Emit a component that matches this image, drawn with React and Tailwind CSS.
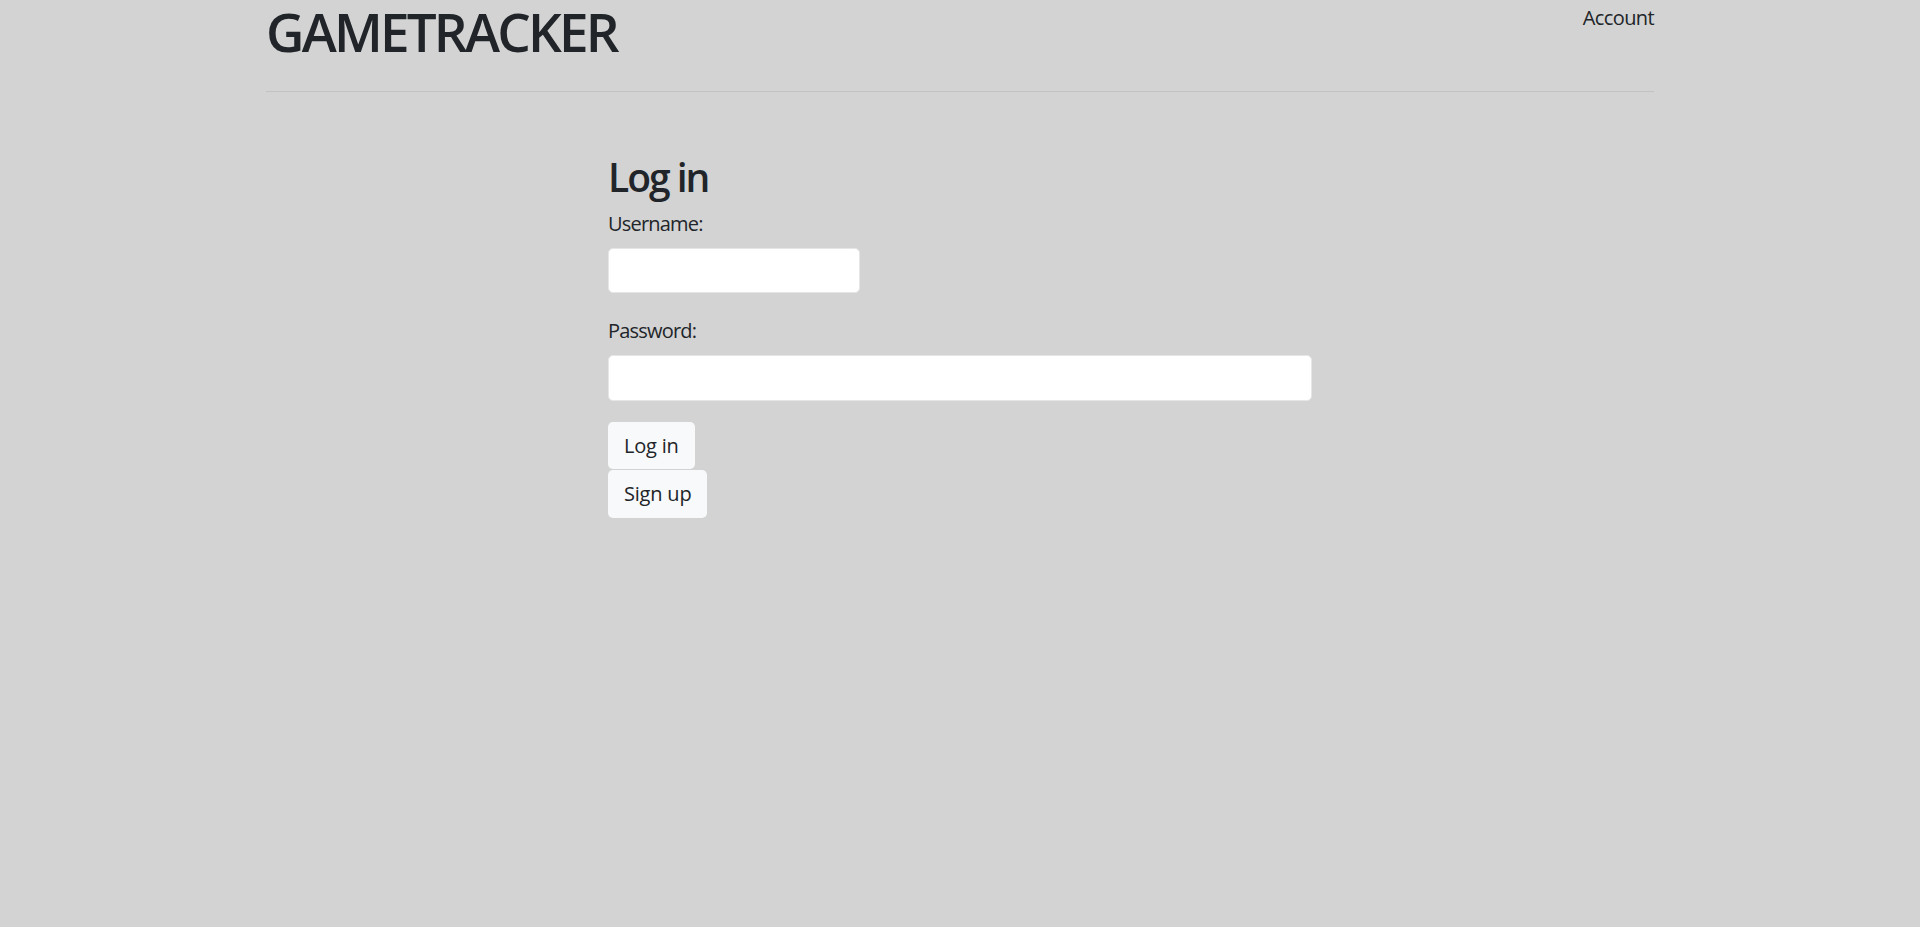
import React from 'react';

const App = () => {
  return (
    <div className="min-h-[927px] bg-[#d3d3d3] text-[#212529] font-['Open_Sans',sans-serif]">
      {/* Header */}
      <div className="mx-[266px]">
        <header className="h-[92px] flex justify-between items-start border-b border-[#c2c2c2]">
          <h1 className="pt-[2px] text-[53px] leading-[60px] font-semibold tracking-[-2.8px]">GAMETRACKER</h1>
          <a href="#" className="pt-[3px] text-[20px] leading-[30px] tracking-[-0.6px]">Account</a>
        </header>
      </div>

      {/* Login form */}
      <main className="w-[704px] mx-auto pt-[61px]">
        <h2 className="text-[39px] leading-[48px] font-semibold tracking-[-2px]">Log in</h2>
        <form className="mt-[8px]" onSubmit={(e) => e.preventDefault()}>
          <div className="mb-[21px]">
            <label className="block text-[20px] leading-[30px] mb-[9px] tracking-[-0.8px]">Username:</label>
            <input type="text" className="block w-[252px] h-[45px] bg-white rounded-[5px] border border-[#e6e6e6] outline-none px-3" />
          </div>
          <div className="mb-[21px]">
            <label className="block pt-[2px] text-[20px] leading-[30px] mb-[9px] tracking-[-0.8px]">Password:</label>
            <input type="password" className="block w-full h-[46px] bg-white rounded-[5px] border border-[#e6e6e6] outline-none px-3" />
          </div>
          <div className="flex flex-col items-start gap-px">
            <button type="submit" className="h-[47px] px-[16px] bg-[#f8f9fa] rounded-[5px] text-[20px] tracking-[-0.2px]">Log in</button>
            <button type="button" className="h-[48px] px-[16px] bg-[#f8f9fa] rounded-[5px] text-[20px] tracking-[-0.2px]">Sign up</button>
          </div>
        </form>
      </main>
    </div>
  );
};

export default App;
